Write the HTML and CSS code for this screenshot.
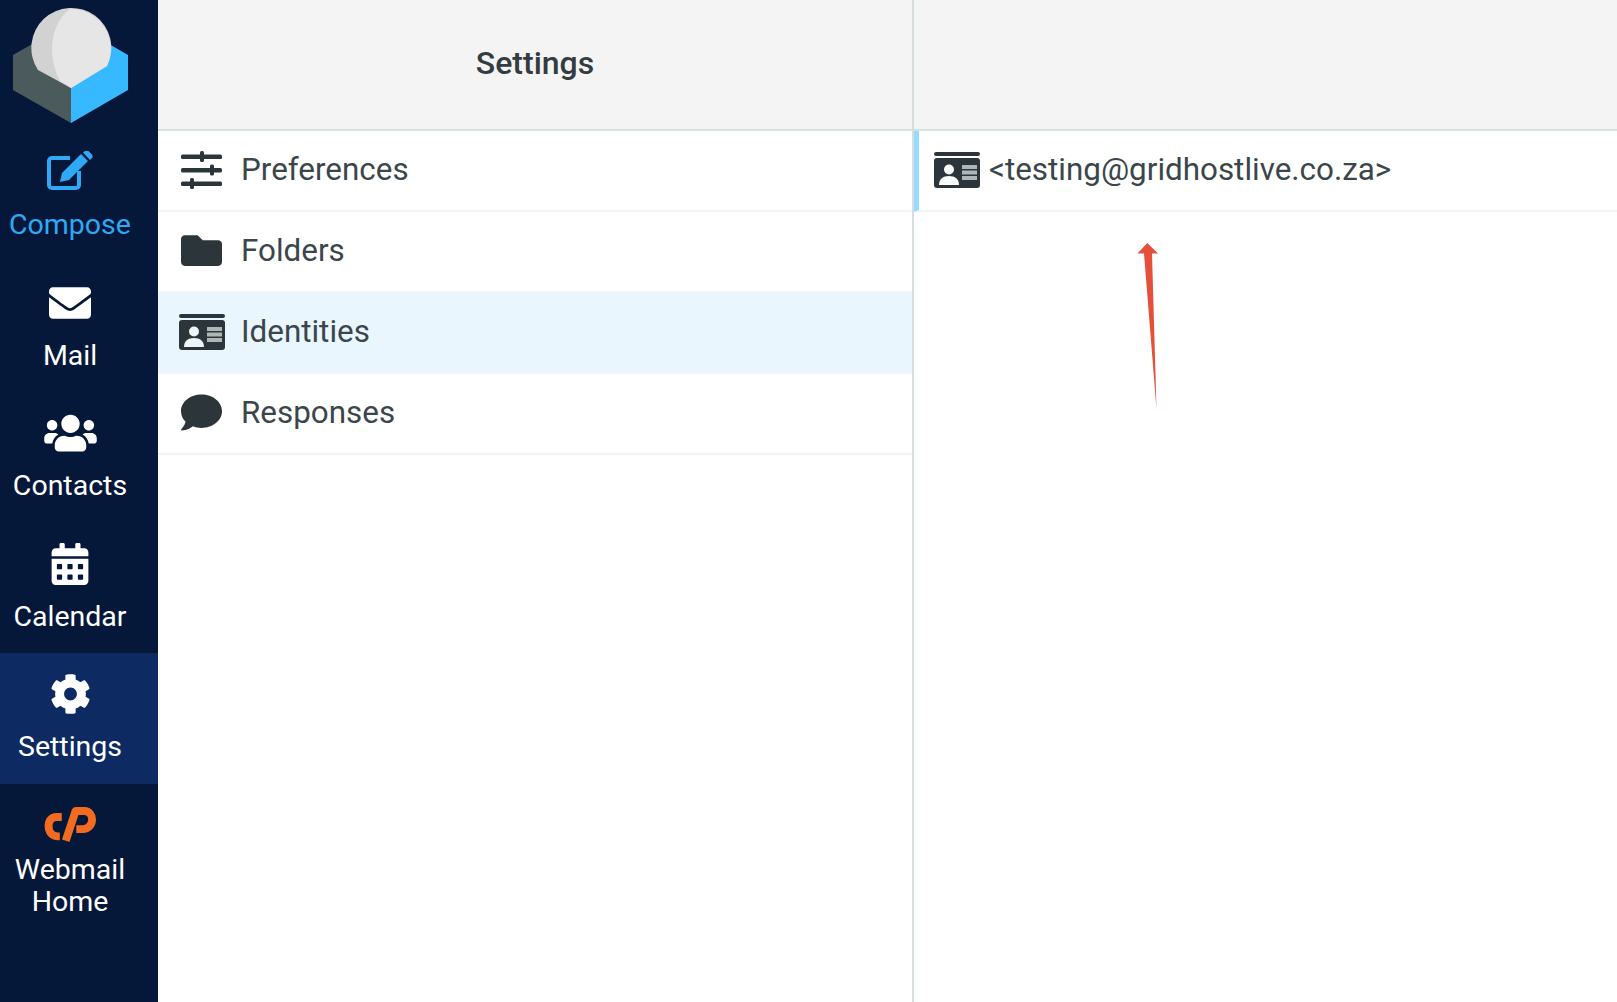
FILE: index.html
```
<!DOCTYPE html>
<html lang="en">
<head>
<meta charset="utf-8">
<title>Settings</title>
<link rel="stylesheet" href="styles.css">
</head>
<body>
<nav class="side">
  <div class="logo">
    <svg viewBox="0 0 158 131" width="158" height="131">
      <polygon points="13,55 71,22 71,123 13,90" fill="#4b5b5c"/>
      <polygon points="71,22 128,55 128,90 71,123" fill="#37b9ff"/>
      <path d="M71 88L38 70A40 40 0 1 1 107 66Z" fill="#d2d2d2"/>
      <path d="M71 88L60 81C55 72 52 60 52 49C52 32 59 17 70 9A40 40 0 0 1 107 66Z" fill="#e6e6e6"/>
    </svg>
  </div>
  <a class="item compose">
    <svg class="ic" viewBox="-1 0 50 42" width="50" height="42">
      <path d="M33 20v14a3 3 0 0 1-3 3H6a3 3 0 0 1-3-3V10a3 3 0 0 1 3-3h18" fill="none" stroke="currentColor" stroke-width="4"/>
      <path d="M14 31l2-9L35 3l7 7-19 19zM37 1.500l2-1.500a3 3 0 0 1 3.500 0l3.500 3.500a3 3 0 0 1 0 3.500l-2 2z" fill="currentColor"/>
    </svg>
    <span>Compose</span>
  </a>
  <a class="item">
    <svg class="ic" viewBox="0 0 512 512" width="42" height="42"><path fill="currentColor" d="M502.3 190.800c3.900-3.100 9.700-.2 9.700 4.700V400c0 26.500-21.500 48-48 48H48c-26.500 0-48-21.500-48-48V195.600c0-5 5.700-7.800 9.700-4.700 22.400 17.400 52.100 39.500 154.100 113.600 21.100 15.400 56.700 47.800 92.200 47.600 35.700.3 72-32.800 92.300-47.600 102-74.100 131.600-96.300 154-113.700zM256 320c23.200.4 56.600-29.200 73.400-41.400 132.700-96.300 142.800-104.700 173.400-128.700 5.800-4.500 9.200-11.500 9.200-18.900v-19c0-26.500-21.500-48-48-48H48C21.500 64 0 85.500 0 112v19c0 7.400 3.400 14.300 9.200 18.900 30.600 23.900 40.700 32.400 173.400 128.700 16.800 12.200 50.200 41.800 73.400 41.400z"/></svg>
    <span>Mail</span>
  </a>
  <a class="item">
    <svg class="ic" viewBox="0 0 640 512" width="53" height="42"><path fill="currentColor" d="M96 224c35.300 0 64-28.700 64-64s-28.700-64-64-64-64 28.700-64 64 28.700 64 64 64zm448 0c35.300 0 64-28.700 64-64s-28.700-64-64-64-64 28.700-64 64 28.700 64 64 64zm32 32h-64c-17.600 0-33.500 7.100-45.100 18.600 40.300 22.100 68.900 62 75.100 109.400h66c17.700 0 32-14.300 32-32v-32c0-35.300-28.700-64-64-64zm-256 0c61.900 0 112-50.100 112-112S381.900 32 320 32 208 82.100 208 144s50.100 112 112 112zm76.800 32h-8.300c-20.800 10-43.900 16-68.500 16s-47.600-6-68.500-16h-8.300C179.600 288 128 339.600 128 403.200V432c0 26.500 21.500 48 48 48h288c26.500 0 48-21.500 48-48v-28.800c0-63.600-51.600-115.200-115.200-115.200zm-223.700-13.400C161.500 263.100 145.600 256 128 256H64c-35.300 0-64 28.700-64 64v32c0 17.700 14.300 32 32 32h65.900c6.300-47.400 34.900-87.300 75.200-109.400z"/></svg>
    <span>Contacts</span>
  </a>
  <a class="item">
    <svg class="ic" viewBox="0 0 448 512" width="38" height="42"><path fill="currentColor" d="M0 464c0 26.500 21.500 48 48 48h352c26.500 0 48-21.500 48-48V192H0v272zm320-196c0-6.600 5.400-12 12-12h40c6.600 0 12 5.400 12 12v40c0 6.600-5.400 12-12 12h-40c-6.600 0-12-5.400-12-12v-40zm0 128c0-6.600 5.400-12 12-12h40c6.600 0 12 5.400 12 12v40c0 6.600-5.400 12-12 12h-40c-6.600 0-12-5.400-12-12v-40zM192 268c0-6.600 5.400-12 12-12h40c6.600 0 12 5.400 12 12v40c0 6.600-5.400 12-12 12h-40c-6.600 0-12-5.400-12-12v-40zm0 128c0-6.600 5.400-12 12-12h40c6.600 0 12 5.400 12 12v40c0 6.600-5.400 12-12 12h-40c-6.600 0-12-5.400-12-12v-40zM64 268c0-6.600 5.400-12 12-12h40c6.600 0 12 5.400 12 12v40c0 6.600-5.400 12-12 12H76c-6.600 0-12-5.400-12-12v-40zm0 128c0-6.600 5.400-12 12-12h40c6.600 0 12 5.400 12 12v40c0 6.600-5.400 12-12 12H76c-6.600 0-12-5.400-12-12v-40zM400 64h-48V16c0-8.800-7.200-16-16-16h-32c-8.800 0-16 7.200-16 16v48H160V16c0-8.800-7.200-16-16-16h-32c-8.800 0-16 7.200-16 16v48H48C21.500 64 0 85.500 0 112v48h448v-48c0-26.500-21.500-48-48-48z"/></svg>
    <span>Calendar</span>
  </a>
  <a class="item active">
    <svg class="ic" viewBox="0 0 512 512" width="41" height="42"><path fill="currentColor" d="M487.400 315.700l-42.600-24.600c4.300-23.200 4.300-47 0-70.200l42.600-24.600c4.900-2.800 7.100-8.600 5.500-14-11.100-35.600-30-67.800-54.700-94.600-3.800-4.100-10-5.100-14.800-2.300L380.800 110c-17.900-15.400-38.500-27.300-60.800-35.100V25.800c0-5.600-3.900-10.500-9.400-11.700-36.700-8.200-74.300-7.800-109.200 0-5.500 1.200-9.400 6.100-9.400 11.700V75c-22.200 7.900-42.800 19.800-60.800 35.100L88.700 85.500c-4.900-2.800-11-1.900-14.800 2.300-24.700 26.700-43.600 58.900-54.700 94.600-1.700 5.400.6 11.200 5.500 14L67.300 221c-4.300 23.200-4.300 47 0 70.200l-42.600 24.600c-4.900 2.800-7.100 8.600-5.500 14 11.100 35.600 30 67.800 54.700 94.600 3.800 4.100 10 5.100 14.800 2.300l42.600-24.600c17.900 15.400 38.500 27.300 60.800 35.100v49.200c0 5.600 3.900 10.500 9.400 11.700 36.700 8.200 74.300 7.800 109.200 0 5.500-1.200 9.400-6.100 9.400-11.700v-49.200c22.200-7.900 42.800-19.800 60.800-35.100l42.600 24.600c4.900 2.800 11 1.900 14.800-2.300 24.700-26.700 43.600-58.900 54.700-94.600 1.500-5.500-.7-11.300-5.600-14.100zM256 336c-44.100 0-80-35.900-80-80s35.900-80 80-80 80 35.900 80 80-35.900 80-80 80z"/></svg>
    <span>Settings</span>
  </a>
  <a class="item home">
    <svg class="ic" viewBox="120 500 170 115" width="56" height="38">
      <path d="M180 533H165C148 533 140 545 140 560C140 578 150 592 168 592H174" fill="none" stroke="#f26b21" stroke-width="24" stroke-linejoin="round"/>
      <path d="M192 605L222 515H248C264 515 272 528 272 541C272 557 260 570 244 570H224" fill="none" stroke="#f26b21" stroke-width="24" stroke-linejoin="round"/>
    </svg>
    <span>Webmail<br>Home</span>
  </a>
</nav>
<section class="col list-col">
  <header class="head"><h1>Settings</h1></header>
  <ul class="rows">
    <li class="row">
      <svg class="ri" viewBox="0 0 41 38" width="41" height="38">
        <g fill="#2c363a"><rect x="0" y="3.500" width="41" height="4.500" rx="1.500"/><rect x="19" y="0" width="4" height="11" rx="1.500"/><rect x="0" y="17" width="41" height="4.500" rx="1.500"/><rect x="29" y="13.500" width="4" height="11" rx="1.500"/><rect x="0" y="30.500" width="41" height="4.500" rx="1.500"/><rect x="9" y="27" width="4" height="11" rx="1.500"/></g>
      </svg>
      <span>Preferences</span>
    </li>
    <li class="row">
      <svg class="ri" viewBox="0 0 512 512" width="41" height="41"><path fill="#2c363a" d="M464 128H272l-64-64H48C21.490 64 0 85.490 0 112v288c0 26.510 21.490 48 48 48h416c26.510 0 48-21.490 48-48V176c0-26.510-21.490-48-48-48z"/></svg>
      <span>Folders</span>
    </li>
    <li class="row selected">
      <svg class="ri card" viewBox="0 0 46 36" width="46" height="36">
        <rect x="0" y="0" width="46" height="4" rx="2" fill="#2c363a"/>
        <rect x="0" y="6" width="46" height="30" rx="3" fill="#2c363a"/>
        <circle cx="15" cy="17.500" r="5" fill="#eef5f9"/>
        <path d="M5 33c0-6 4-9 10-9s10 3 10 9z" fill="#eef5f9"/>
        <rect x="28" y="13" width="15" height="4" fill="#aeb6b8"/><rect x="28" y="18.500" width="15" height="4" fill="#aeb6b8"/><rect x="28" y="24" width="15" height="4" fill="#aeb6b8"/>
      </svg>
      <span>Identities</span>
    </li>
    <li class="row">
      <svg class="ri" viewBox="0 0 512 512" width="41" height="41"><path fill="#2c363a" d="M256 32C114.600 32 0 125.100 0 240c0 49.600 21.400 95 57 130.700C44.500 421.100 2.700 466 2.200 466.500c-2.200 2.300-2.800 5.700-1.500 8.700S4.800 480 8 480c66.300 0 116-31.800 140.600-51.400 32.700 12.300 69 19.400 107.400 19.400 141.400 0 256-93.100 256-208S397.400 32 256 32z"/></svg>
      <span>Responses</span>
    </li>
  </ul>
</section>
<section class="col detail-col">
  <header class="head"></header>
  <div class="row identity">
    <svg class="ri card" viewBox="0 0 46 36" width="46" height="36">
      <rect x="0" y="0" width="46" height="4" rx="2" fill="#2c363a"/>
      <rect x="0" y="6" width="46" height="30" rx="3" fill="#2c363a"/>
      <circle cx="15" cy="17.500" r="5" fill="#fafafa"/>
      <path d="M5 33c0-6 4-9 10-9s10 3 10 9z" fill="#fafafa"/>
      <rect x="28" y="13" width="15" height="4" fill="#aeb6b8"/><rect x="28" y="18.500" width="15" height="4" fill="#aeb6b8"/><rect x="28" y="24" width="15" height="4" fill="#aeb6b8"/>
    </svg>
    <span>&lt;testing@gridhostlive.co.za&gt;</span>
  </div>
</section>
<svg class="arrow" viewBox="0 0 30 170" width="30" height="170">
  <polygon points="10.300,0 21,10.500 15,10.500 19.500,166 7,10.500 0.500,10.500" fill="#e5503a"/>
</svg>
</body>
</html>
```
FILE: styles.css
```
* { box-sizing: border-box; }
html, body { margin: 0; height: 100%; }
body {
  display: flex;
  height: 100vh;
  overflow: hidden;
  background: #fff;
  font-family: Roboto, "Liberation Sans", sans-serif;
  color: #3b464b;
}
.side {
  flex: 0 0 158px;
  display: flex;
  flex-direction: column;
  background: #05183a;
  color: #fff;
}
.logo { height: 131px; }
.logo svg { display: block; }
.item {
  height: 130.6px;
  padding: 20px 18px 0 0;
  display: flex;
  flex-direction: column;
  align-items: center;
  font-size: 28.5px;
  line-height: 32px;
  text-align: center;
  color: #fff;
}
.item .ic { display: block; flex: none; height: 42px; margin-bottom: 16px; }
.compose { color: #2fa9f5; }
.active { background: #0d2a63; }
.home { padding-top: 22px; }
.home .ic { height: 38px; margin-bottom: 10px; }
.col { min-width: 0; }
.list-col { flex: 0 0 756px; border-right: 2px solid #d5dde0; }
.detail-col { flex: 1; }
.head {
  height: 131px;
  padding-bottom: 4px;
  background: #f4f4f4;
  border-bottom: 2px solid #d9e0e4;
  display: flex;
  align-items: center;
  justify-content: center;
}
.head h1 { margin: 0; font-size: 32px; font-weight: 500; color: #333c40; }
.rows { list-style: none; margin: 0; padding: 0; }
.row {
  height: 81px;
  display: flex;
  align-items: center;
  padding: 0 0 2px 23px;
  border-bottom: 2px solid #f2f4f5;
  font-size: 31.4px;
}
.ri { flex: none; margin-right: 19px; }
.card { margin-left: -2px; margin-right: 16px; }
.selected { background: #e9f6fd; }
.identity {
  border-left: 5px solid #96dcff;
  padding-left: 15px;
}
.identity .card { margin-left: 0; margin-right: 9px; }
.arrow { position: absolute; left: 1137px; top: 243px; }
```
